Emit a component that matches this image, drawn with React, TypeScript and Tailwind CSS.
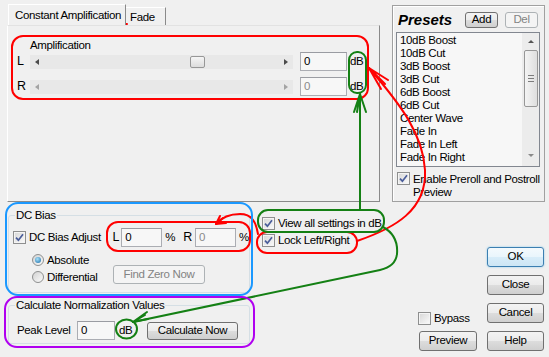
import React from 'react';

const presets = [
  '10dB Boost',
  '10dB Cut',
  '3dB Boost',
  '3dB Cut',
  '6dB Boost',
  '6dB Cut',
  'Center Wave',
  'Fade In',
  'Fade In Left',
  'Fade In Right',
  'Fade Out',
];

const Check: React.FC<{ checked?: boolean }> = ({ checked }) => (
  <span className="flex w-[13px] h-[13px] shrink-0 items-center justify-center border border-[#8e8f8f] bg-[linear-gradient(135deg,#d6d6d6,#fbfbfb)] shadow-[inset_0_0_0_1px_#f4f4f4]">
    {checked && (
      <svg width="9" height="9" viewBox="0 0 9 9">
        <path d="M1 4.6 L3.4 7.2 L8 1.2" fill="none" stroke="#4a5d9a" strokeWidth="1.7" />
      </svg>
    )}
  </span>
);

const Radio: React.FC<{ checked?: boolean }> = ({ checked }) => (
  <span className="flex w-[12px] h-[12px] shrink-0 items-center justify-center rounded-full border border-[#8e8f8f] bg-[linear-gradient(135deg,#d2d2d2,#fbfbfb)]">
    {checked && <span className="w-[6px] h-[6px] rounded-full bg-[radial-gradient(circle_at_40%_35%,#a8e2fb,#1669a5)]" />}
  </span>
);

const Button: React.FC<{ label: string; w: string; h?: string; disabled?: boolean; focused?: boolean }> = ({
  label,
  w,
  h = 'h-[20px]',
  disabled,
  focused,
}) => {
  let look =
    'border-[#707070] bg-[linear-gradient(#f3f3f3_0%,#ebebeb_50%,#dddddd_50%,#cfcfcf_100%)] text-black';
  if (disabled) look = 'border-[#adb2b5] bg-[#f4f4f4] text-[#838383]';
  if (focused)
    look =
      'border-[#3c7fb1] bg-[linear-gradient(#f4fafd_0%,#e9f5fc_50%,#d8edf9_50%,#cde6f5_100%)] text-black shadow-[0_0_2px_#7ec4ea]';
  return (
    <div className={`${w} ${h} flex items-center justify-center rounded-[3px] border shrink-0 ${look}`}>
      <span className="leading-none">{label}</span>
    </div>
  );
};

const Edit: React.FC<{ value: string; w: string; disabled?: boolean }> = ({ value, w, disabled }) => (
  <div
    className={`${w} h-[19px] shrink-0 flex items-center pl-[3px] border border-[#abadb3] border-t-[#9a9ca2] bg-[#f7f7f7] ${
      disabled ? 'text-[#8a8a8a]' : 'text-black'
    }`}
  >
    {value}
  </div>
);

// horizontal scrollbar used as the level slider
const HBar: React.FC<{ thumb?: boolean }> = ({ thumb }) => {
  const arrow = thumb ? '#4b4b4b' : '#a3a3a3';
  return (
    <div className="w-[263px] h-[14px] shrink-0 flex items-center bg-[#e8e8e8]">
      <svg width="14" height="14" viewBox="0 0 14 14" className="shrink-0">
        <path d="M5 7 L9 4 L9 10 Z" fill={arrow} />
      </svg>
      <div className="flex-1 flex items-center">
        {thumb && (
          <div className="ml-[146px] w-[15px] h-[12px] rounded-[2px] border border-[#979797] bg-[linear-gradient(#f5f5f5,#dcdcdc)]" />
        )}
      </div>
      <svg width="14" height="14" viewBox="0 0 14 14" className="shrink-0">
        <path d="M9 7 L5 4 L5 10 Z" fill={arrow} />
      </svg>
    </div>
  );
};

const App: React.FC = () => {
  return (
    <div className="relative w-[549px] h-[357px] overflow-hidden bg-[#f0f0f0] text-[11.5px] leading-[13px] tracking-[-0.35px] text-black font-['Liberation_Sans',Arial,sans-serif]">
      {/* top: tab control + presets */}
      <div className="flex pl-[7px] pt-[4px] h-[203px]">
        <div className="w-[373px] flex flex-col">
          <div className="flex items-end h-[21px]">
            <div className="ml-[1px] w-[118px] h-[21px] pl-[6px] pt-[4px] border-t border-l border-r border-t-white border-l-white border-r-[#8a8a8a] bg-[#f0f0f0] relative z-10 whitespace-nowrap">
              Constant Amplification
            </div>
            <div className="w-[40px] h-[18px] pl-[4px] pt-[3px] border-t border-r border-t-white border-r-[#8a8a8a]">
              Fade
            </div>
          </div>
          <div className="h-[177px] border border-l-white border-t-[#e2e2e2] border-r-[#8a8a8a] border-b-[#8a8a8a] pl-[9px] pt-[13px]">
            <div className="pl-[13px] h-[13px]">Amplification</div>
            <div className="flex items-center h-[19px]">
              <span className="w-[13px] text-[12.5px]">L</span>
              <HBar thumb />
              <div className="ml-[7px]">
                <Edit value="0" w="w-[47px]" />
              </div>
              <span className="ml-[3px]">dB</span>
            </div>
            <div className="flex items-center h-[19px] mt-[6px]">
              <span className="w-[13px] text-[12.5px]">R</span>
              <HBar />
              <div className="ml-[7px]">
                <Edit value="0" w="w-[47px]" disabled />
              </div>
              <span className="ml-[3px]">dB</span>
            </div>
          </div>
        </div>

        <div className="ml-[12px] mt-[1px] w-[153px] h-[197px] border border-[#a0a0a0] shadow-[inset_1px_1px_0_#ffffff] flex flex-col px-[3px]">
          <div className="flex items-center h-[15px] mt-[6px] pl-[2px] pr-[3px]">
            <span className="font-bold italic text-[15px] tracking-normal">Presets</span>
            <div className="ml-auto">
              <Button label="Add" w="w-[33px]" h="h-[16px]" />
            </div>
            <div className="ml-[7px]">
              <Button label="Del" w="w-[33px]" h="h-[16px]" disabled />
            </div>
          </div>
          <div className="mt-[5px] w-[144px] h-[135px] border border-[#828790] bg-[#f7f7f7] flex overflow-hidden">
            <div className="flex-1 h-full pt-[1px] pl-[3px] overflow-hidden">
              {presets.map((p) => (
                <div key={p} className="h-[13px] whitespace-nowrap">
                  {p}
                </div>
              ))}
            </div>
            <div className="w-[17px] flex flex-col items-center bg-[#ececec]">
              <svg width="15" height="16" viewBox="0 0 15 16">
                <path d="M5 10 L8 7 L11 10 Z" fill="#555" />
              </svg>
              <div className="mt-[1px] w-[14px] h-[57px] rounded-[2px] border border-[#979797] bg-[linear-gradient(90deg,#f4f4f4,#dedede)] flex flex-col items-center justify-center gap-[2px]">
                <span className="w-[6px] h-px bg-[#7c7c7c]" />
                <span className="w-[6px] h-px bg-[#7c7c7c]" />
                <span className="w-[6px] h-px bg-[#7c7c7c]" />
              </div>
              <svg width="15" height="16" viewBox="0 0 15 16" className="mt-auto mb-[2px]">
                <path d="M5 6 L8 9 L11 6 Z" fill="#8a8a8a" />
              </svg>
            </div>
          </div>
          <div className="flex mt-[5px] pl-[1px]">
            <Check checked />
            <span className="ml-[3px] pt-[1px]">
              Enable Preroll and Postroll
              <br />
              Preview
            </span>
          </div>
        </div>
      </div>

      {/* bottom */}
      <div className="flex h-[154px]">
        <div className="ml-[8px] w-[242px] flex flex-col">
          {/* DC Bias group */}
          <div className="mt-[12px] h-[78px] border border-[#d5dfe5] rounded-[3px] pl-[4px]">
            <div className="-mt-[7px] ml-[2px] px-[1px] w-fit bg-[#f0f0f0]">DC Bias</div>
            <div className="flex items-center h-[21px] mt-[5px]">
              <Check checked />
              <span className="ml-[3px] w-[84px] whitespace-nowrap">DC Bias Adjust</span>
              <span className="w-[9px] text-[12.5px]">L</span>
              <Edit value="0" w="w-[41px]" />
              <span className="ml-[3px] w-[18px]">%</span>
              <span className="w-[12px] text-[12.5px]">R</span>
              <Edit value="0" w="w-[41px]" disabled />
              <span className="ml-[3px]">%</span>
            </div>
            <div className="flex mt-[5px]">
              <div className="pl-[19px] w-[100px] flex flex-col gap-[3px]">
                <div className="flex items-center h-[14px]">
                  <Radio checked />
                  <span className="ml-[3px]">Absolute</span>
                </div>
                <div className="flex items-center h-[14px]">
                  <Radio />
                  <span className="ml-[3px]">Differential</span>
                </div>
              </div>
              <div className="mt-[12px]">
                <Button label="Find Zero Now" w="w-[92px]" h="h-[19px]" disabled />
              </div>
            </div>
          </div>

          {/* Normalization group */}
          <div className="mt-[12px] h-[39px] border border-[#d5dfe5] rounded-[3px] pl-[8px]">
            <div className="-mt-[7px] -ml-[2px] px-[1px] w-fit bg-[#f0f0f0] whitespace-nowrap">Calculate Normalization Values</div>
            <div className="flex items-center h-[19px] mt-[9px]">
              <span className="w-[60px] whitespace-nowrap">Peak Level</span>
              <Edit value="0" w="w-[38px]" />
              <span className="ml-[4px] w-[28px]">dB</span>
              <Button label="Calculate Now" w="w-[91px]" h="h-[18px]" />
            </div>
          </div>
        </div>

        <div className="ml-[12px] w-[150px] flex flex-col pt-[14px] gap-[4px]">
          <div className="flex items-center h-[13px]">
            <Check checked />
            <span className="ml-[3px] whitespace-nowrap">View all settings in dB</span>
          </div>
          <div className="flex items-center h-[13px]">
            <Check checked />
            <span className="ml-[3px]">Lock Left/Right</span>
          </div>
        </div>

        <div className="ml-[6px] w-[59px] flex flex-col justify-end gap-[6px] pb-[6px]">
          <div className="flex items-center h-[13px]">
            <Check />
            <span className="ml-[3px]">Bypass</span>
          </div>
          <div className="ml-[1px]">
            <Button label="Preview" w="w-[58px]" />
          </div>
        </div>

        <div className="ml-[10px] w-[57px] flex flex-col gap-[8px] pt-[44px]">
          <Button label="OK" w="w-[57px]" focused />
          <Button label="Close" w="w-[57px]" />
          <Button label="Cancel" w="w-[57px]" />
          <Button label="Help" w="w-[57px]" />
        </div>
      </div>

      {/* hand-drawn annotations over the dialog */}
      <svg className="absolute inset-0 pointer-events-none" width="549" height="357" viewBox="0 0 549 357" fill="none" strokeWidth="2" strokeLinecap="round" strokeLinejoin="round">
        <g stroke="#ff0000">
          <path d="M10 24 L127 24" />
          <rect x="12" y="36" width="356" height="63" rx="11" />
          <rect x="107" y="222" width="143" height="29" rx="11" />
          <rect x="257" y="232" width="100" height="21" rx="10" />
          <path d="M357 241 C395 228 427 210 425 170 C423 135 402 106 369 68" />
          <path d="M369 68 L388 80 M369 68 L385 84 M369 68 L381 89 M369 68 L378 78" />
          <path d="M258 234 C256 222 252 214 240 214 C230 214 222 217 216 224" />
          <path d="M216 224 L220 216 M216 224 L226 223 M216 224 L223 218" />
        </g>
        <g stroke="#148014">
          <rect x="349" y="52" width="17" height="41" rx="8" />
          <path d="M360 210 L360 94" />
          <path d="M360 94 L354 112 M360 94 L366 112 M360 94 L357 112" />
          <rect x="258" y="210" width="126" height="22" rx="10" />
          <path d="M383 227 C394 233 398 242 397 254 C396 263 389 268 380 270 L133 322" />
          <path d="M133 322 L147 312 M133 322 L148 319 M133 322 L145 315" />
          <ellipse cx="126.5" cy="329" rx="10.5" ry="9.5" />
        </g>
        <rect x="6" y="203" width="246" height="92" rx="12" stroke="#1a98ff" />
        <rect x="5" y="297" width="249" height="50" rx="12" stroke="#b000f0" />
      </svg>
    </div>
  );
};

export default App;
